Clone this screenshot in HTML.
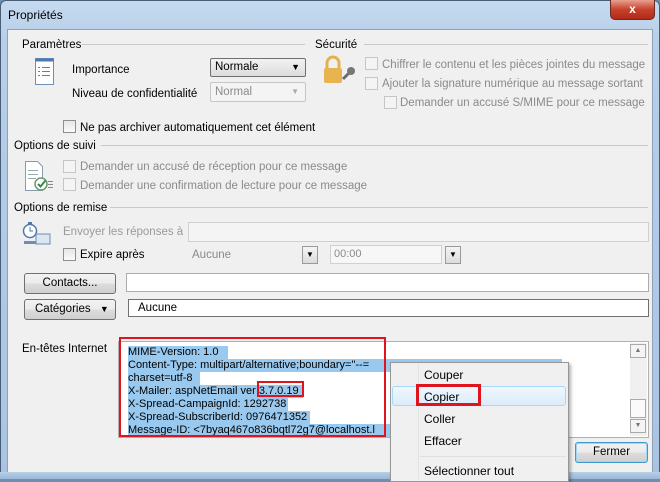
<!DOCTYPE html>
<html><head><meta charset="utf-8"><style>
*{margin:0;padding:0;box-sizing:border-box}
body{width:660px;height:479px;overflow:hidden;background:#6e8fb3;font-family:"Liberation Sans",sans-serif;font-size:11.5px;color:#000;position:relative}
.a{position:absolute;white-space:nowrap}
.t{margin-top:2px}
.frame{position:absolute;left:0;top:0;width:660px;height:479px;background:linear-gradient(#c5daef,#b7cfe8 40px,#a9c4e2);border:1px solid #4a5d76;border-radius:6px 6px 0 0}
.client{position:absolute;left:7px;top:29px;width:646px;height:444px;background:#f0f0f0;border:1px solid #8da1b8}
.line{position:absolute;height:1px;background:#c8c8c8}
.cb{position:absolute;width:13px;height:13px;border:1px solid #8f8f8f;background:linear-gradient(#e6e6e6,#fafafa)}
.cb.d{border-color:#c6c6c6;background:#f4f4f4}
.g{color:#8a8a8a}
.inp{position:absolute;background:#fff;border:1px solid #abadb3}
.btn{position:absolute;border:1px solid #707070;border-radius:3px;background:linear-gradient(#f2f2f2,#ebebeb 50%,#dddddd 51%,#cfcfcf);text-align:center;line-height:18px}
.sel{background:#99c9ef}
.hl{position:absolute;left:128px;font-size:11px;line-height:13px}
</style></head><body>
<div class="frame"></div>
<div class="a" style="left:8px;top:8px;font-size:12px">Propriétés</div>
<div class="a" style="left:610px;top:0;width:45px;height:20px;border:1px solid #6b2a22;border-top:none;border-radius:0 0 5px 5px;background:linear-gradient(#e8a090,#c7412c 50%,#b02a17);color:#fff;text-align:center;font-weight:bold;font-size:12px;line-height:18px">x</div>
<div class="client"></div>

<div class="a t" style="left:22px;top:37px">Paramètres</div>
<div class="line" style="left:82px;top:44px;width:223px"></div>
<div class="a t" style="left:315px;top:37px">Sécurité</div>
<div class="line" style="left:364px;top:44px;width:284px"></div>

<svg class="a" style="left:35px;top:58px" width="20" height="28"><rect x="0.5" y="0.5" width="18" height="26" fill="#fff" stroke="#6d8fb5"/><rect x="0.5" y="0.5" width="18" height="3" fill="#4b7ab0"/><g stroke="#6a7d96"><line x1="7" y1="9.5" x2="15" y2="9.5"/><line x1="7" y1="13.5" x2="15" y2="13.5"/><line x1="7" y1="17.5" x2="15" y2="17.5"/></g><g fill="#6a7d96"><rect x="3" y="9" width="2" height="1"/><rect x="3" y="13" width="2" height="1"/><rect x="3" y="17" width="2" height="1"/></g></svg>
<div class="a t" style="left:72px;top:62px">Importance</div>
<div class="a" style="left:210px;top:58px;width:96px;height:19px;border:1px solid #707070;border-radius:2px;background:linear-gradient(#f2f2f2,#dcdcdc);padding-left:4px;line-height:17px">Normale<span style="position:absolute;right:5px;top:0;font-size:9px">▼</span></div>
<div class="a t" style="left:72px;top:86px">Niveau de confidentialité</div>
<div class="a g" style="left:210px;top:82px;width:96px;height:20px;border:1px solid #c6c6c6;border-radius:2px;background:#f4f4f4;padding-left:4px;line-height:18px">Normal<span style="position:absolute;right:6px;top:0;font-size:8px;color:#aaa">▼</span></div>

<div class="cb" style="left:63px;top:120px"></div>
<div class="a t" style="left:80px;top:120px">Ne pas archiver automatiquement cet élément</div>

<svg class="a" style="left:321px;top:55px" width="36" height="32"><rect x="3" y="13" width="18" height="15" rx="2" fill="#e8b450"/><path d="M6 13 V8 a6 6 0 0 1 12 0 V13" fill="none" stroke="#e3b250" stroke-width="3"/><path d="M22 24 l8 -8" stroke="#6b6b6b" stroke-width="3"/><circle cx="30" cy="16" r="4" fill="#777"/></svg>
<div class="cb d" style="left:365px;top:57px"></div>
<div class="a g t" style="left:382px;top:57px">Chiffrer le contenu et les pièces jointes du message</div>
<div class="cb d" style="left:365px;top:77px"></div>
<div class="a g t" style="left:382px;top:76px">Ajouter la signature numérique au message sortant</div>
<div class="cb d" style="left:384px;top:96px"></div>
<div class="a g t" style="left:400px;top:95px">Demander un accusé S/MIME pour ce message</div>

<div class="a t" style="left:14px;top:138px">Options de suivi</div>
<div class="line" style="left:101px;top:145px;width:547px"></div>
<svg class="a" style="left:24px;top:160px" width="30" height="33"><path d="M1.5 1.5 h12 l5 5 v24 h-17z" fill="#fff" stroke="#8a9aae"/><g stroke="#9aa"><line x1="4" y1="10.5" x2="14" y2="10.5"/><line x1="4" y1="14.5" x2="14" y2="14.5"/><line x1="4" y1="18.5" x2="12" y2="18.5"/></g><circle cx="17" cy="24" r="6" fill="#fff" stroke="#6a9a6a" stroke-width="1.5"/><path d="M14 24 l2.5 2.5 l5 -6" fill="none" stroke="#3a8a4a" stroke-width="2"/><g stroke="#888"><line x1="24" y1="21.5" x2="29" y2="21.5"/><line x1="24" y1="24.5" x2="29" y2="24.5"/><line x1="24" y1="27.5" x2="29" y2="27.5"/></g></svg>
<div class="cb d" style="left:63px;top:160px"></div>
<div class="a g t" style="left:80px;top:159px">Demander un accusé de réception pour ce message</div>
<div class="cb d" style="left:63px;top:178px"></div>
<div class="a g t" style="left:80px;top:178px">Demander une confirmation de lecture pour ce message</div>

<div class="a t" style="left:14px;top:200px">Options de remise</div>
<div class="line" style="left:110px;top:207px;width:538px"></div>
<svg class="a" style="left:22px;top:221px" width="30" height="26"><circle cx="8" cy="10" r="6.5" fill="#fff" stroke="#4a7ab0" stroke-width="1.5"/><path d="M8 6 v4 h3" fill="none" stroke="#4a7ab0"/><rect x="6" y="1" width="4" height="2" fill="#4a7ab0"/><rect x="14" y="13" width="14" height="10" fill="#dde6f0" stroke="#6d8fb5"/><rect x="2" y="20" width="12" height="3" fill="#6d8fb5"/></svg>
<div class="a t" style="left:63px;top:224px;color:#9a9a9a">Envoyer les réponses à</div>
<div class="inp" style="left:188px;top:222px;width:461px;height:20px;border-color:#d0d0d0;background:#f4f4f4"></div>
<div class="cb" style="left:63px;top:248px"></div>
<div class="a t" style="left:80px;top:247px">Expire après</div>
<div class="a g t" style="left:192px;top:247px">Aucune</div>
<div class="a" style="left:302px;top:246px;width:16px;height:18px;border:1px solid #9a9a9a;background:linear-gradient(#f4f4f4,#dcdcdc);font-size:8px;text-align:center;line-height:16px">▼</div>
<div class="inp g" style="left:330px;top:245px;width:112px;height:19px;border-color:#d0d0d0;background:#f7f7f7;padding-left:3px;line-height:17px;font-size:11px">00:00</div>
<div class="a" style="left:445px;top:246px;width:16px;height:18px;border:1px solid #9a9a9a;background:linear-gradient(#f4f4f4,#dcdcdc);font-size:8px;text-align:center;line-height:16px">▼</div>

<div class="btn" style="left:24px;top:273px;width:92px;height:21px">Contacts...</div>
<div class="inp" style="left:126px;top:273px;width:523px;height:19px"></div>
<div class="btn" style="left:24px;top:299px;width:92px;height:21px;text-align:left;padding-left:10px">Catégori<span>es</span> <span style="font-size:9px;margin-left:6px">▼</span></div>
<div class="inp" style="left:128px;top:299px;width:521px;height:18px;border-color:#707070;padding-left:9px;line-height:16px">Aucune</div>

<div class="a t" style="left:22px;top:341px">En-têtes Internet</div>
<div class="inp" style="left:118px;top:341px;width:531px;height:97px;border-color:#b0b0b0"></div>
<div class="a" style="left:630px;top:343px;width:17px;height:93px;background:#f0f0f0"></div>
<div class="a" style="left:630px;top:344px;width:16px;height:14px;border:1px solid #aaa;background:#f4f4f4;font-size:7px;text-align:center;color:#777;line-height:12px">▲</div>
<div class="a" style="left:630px;top:399px;width:16px;height:19px;border:1px solid #aaa;background:#fafafa"></div>
<div class="a" style="left:630px;top:419px;width:16px;height:14px;border:1px solid #aaa;background:#f4f4f4;font-size:7px;text-align:center;color:#777;line-height:12px">▼</div>

<div class="hl sel" style="top:346px;width:100px">MIME-Version: 1.0</div>
<div class="hl sel" style="top:359px;width:434px">Content-Type: multipart/alternative;boundary="--=</div>
<div class="hl sel" style="top:372px;width:72px">charset=utf-8</div>
<div class="hl sel" style="top:385px;width:175px">X-Mailer: aspNetEmail ver 3.7.0.19</div>
<div class="hl sel" style="top:398px;width:160px">X-Spread-CampaignId: 1292738</div>
<div class="hl sel" style="top:411px;width:182px">X-Spread-SubscriberId: 0976471352</div>
<div class="hl sel" style="top:424px;width:262px">Message-ID: &lt;7byaq467o836bqtl72g7@localhost.l</div>
<div class="a" style="left:119px;top:337px;width:267px;height:100px;border:2px solid #e0141c"></div>
<div class="a" style="left:257px;top:381px;width:47px;height:16px;border:2px solid #e0141c"></div>

<div class="btn" style="left:575px;top:442px;width:73px;height:21px;border-color:#3c9ad0;box-shadow:inset 0 0 0 1px #9fd6f5">Fermer</div>
<div class="a" style="left:0;top:472px;width:660px;height:7px;background:linear-gradient(#b8cfe6,#9ab7d8)"></div>

<div class="a" style="left:390px;top:362px;width:179px;height:120px;background:#f0f0f0;border:1px solid #979797;box-shadow:2px 2px 3px rgba(0,0,0,.3);font-size:12px"></div>
<div class="a" style="left:418px;top:364px;width:1px;height:115px;background:#e2e3e3"></div>
<div class="a" style="left:392px;top:386px;width:174px;height:20px;border:1px solid #a8d8f5;border-radius:3px;background:linear-gradient(#f0f7fd,#dbecfa)"></div>
<div class="a" style="left:424px;top:368px;font-size:12px">Couper</div>
<div class="a" style="left:424px;top:390px;font-size:12px">Copier</div>
<div class="a" style="left:424px;top:412px;font-size:12px">Coller</div>
<div class="a" style="left:424px;top:434px;font-size:12px">Effacer</div>
<div class="a" style="left:420px;top:456px;width:146px;height:1px;background:#e0e0e0"></div>
<div class="a" style="left:424px;top:464px;font-size:12px">Sélectionner tout</div>
<div class="a" style="left:416px;top:384px;width:65px;height:22px;border:3px solid #e0141c"></div>
</body></html>
